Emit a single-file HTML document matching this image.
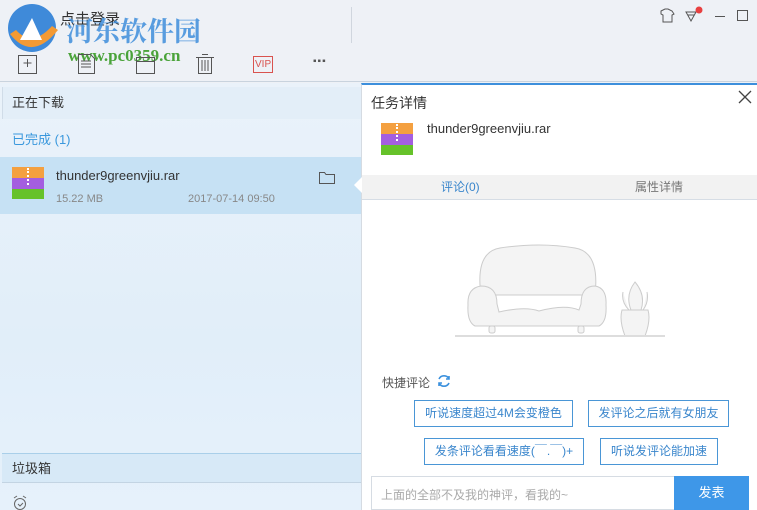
<!DOCTYPE html>
<html><head><meta charset="utf-8"><style>
*{margin:0;padding:0;box-sizing:border-box}
body{width:757px;height:510px;overflow:hidden;position:relative;font-family:"Liberation Sans","Noto Sans CJK SC",sans-serif;background:#eef1f6;font-size:13px;color:#333}
.a{position:absolute}
.left{left:0;top:83px;width:361px;height:427px;background:linear-gradient(180deg,#eaf2fa,#e1eef9 60%,#e6f1fb)}
.btn{position:absolute;border:1px solid #4a96d6;color:#3a86cc;font-size:12px;text-align:center;line-height:25px;background:#fff}
</style></head><body>
<div class="a" style="left:0;top:0;width:757px;height:82px;background:#eef1f6;border-bottom:1px solid #c9d3de"></div>
<svg class="a" style="left:2px;top:0" width="62" height="60"><circle cx="30" cy="28" r="24" fill="#3f8ad9"/><path d="M8 34 Q30 62 56 30 L50 26 Q30 48 14 30Z" fill="#f39a34"/><path d="M18 40 L30 18 L40 40Z" fill="#fff"/></svg>
<div class="a" style="left:60px;top:8px;font-size:15px;color:#333">点击登录</div>
<div class="a" style="left:66px;top:10px;font-size:27px;font-weight:bold;color:#3e8edb;opacity:.85;font-family:'Noto Serif CJK SC',serif">河东软件园</div>
<div class="a" style="left:68px;top:46px;font-size:17px;font-weight:bold;color:#4aa33a;font-family:'Liberation Serif',serif">www.pc0359.cn</div>
<div class="a" style="left:351px;top:7px;width:1px;height:36px;background:#d0d6de"></div>
<svg class="a" style="left:0;top:48px" width="340" height="30" fill="none" stroke="#555" stroke-width="1">
<rect x="18.5" y="7.5" width="18" height="18"/><path d="M27.5 11v8M23.5 15h8"/>
<path d="M78.5 6.5h12l4 4v15h-16z M81 13h10M81 16h10M81 19h10"/>
<rect x="136.5" y="9.5" width="18" height="16"/><path d="M136.5 13.5h18"/>
<path d="M196 9.5h18M202 6.5h6M198.5 9.5v16h13v-16M202 12v11M205 12v11M208 12v11"/>
<rect x="253.5" y="8.5" width="19" height="16" stroke="#d9534f"/>
</svg>
<div class="a" style="left:255px;top:59px;font-size:10px;color:#d9534f">VIP</div>
<div class="a" style="left:313px;top:56px;font-size:10px;color:#555;letter-spacing:1px">▪▪▪</div>
<svg class="a" style="left:655px;top:6px" width="100" height="20" fill="none" stroke="#555">
<path d="M6 5l4-2h3l4 2 2 3-2 1v7H8V9L6 8z"/>
<path d="M31 6h10l-5 9z M33 9h6"/><circle cx="44" cy="4" r="3.5" fill="#e84040" stroke="none"/>
<path d="M60 10.5h10"/><rect x="82.5" y="4.5" width="10" height="10"/>
</svg>
<div class="a left"></div>
<div class="a" style="left:2px;top:87px;width:359px;height:32px;background:#e3eef8;border-left:1px solid #d0dce8"></div>
<div class="a" style="left:12px;top:92px;font-size:13px">正在下载</div>
<div class="a" style="left:12px;top:129px;font-size:13px;color:#3a98dd">已完成 (1)</div>
<div class="a" style="left:0;top:157px;width:361px;height:57px;background:#c6e1f4"></div>
<div class="a" style="left:12px;top:167px;width:32px;height:11px;background:#f4a040"></div>
<div class="a" style="left:12px;top:178px;width:32px;height:11px;background:#a45ee0"></div>
<div class="a" style="left:12px;top:189px;width:32px;height:10px;background:#66c22a"></div>
<div class="a" style="left:27px;top:168px;width:2px;height:17px;border-left:2px dotted #fff"></div>
<div class="a" style="left:56px;top:168px;font-size:13px;color:#333">thunder9greenvjiu.rar</div>
<div class="a" style="left:56px;top:193px;font-size:11px;color:#888">15.22 MB</div>
<div class="a" style="left:188px;top:193px;font-size:11px;color:#888">2017-07-14 09:50</div>
<svg class="a" style="left:318px;top:170px" width="18" height="15" fill="none" stroke="#555"><path d="M1.5 2.5h5l1.5 2h8.5v9h-15z"/></svg>
<div class="a" style="left:2px;top:453px;width:359px;height:30px;background:#d7e9f7;border-top:1px solid #a9cfe9;border-bottom:1px solid #c3d4e3"></div>
<div class="a" style="left:12px;top:458px;font-size:13px">垃圾箱</div>
<svg class="a" style="left:12px;top:494px" width="16" height="16" fill="none" stroke="#666"><circle cx="8" cy="10" r="5.5"/><path d="M6 10l2 2 3-3M2 4l3-2M14 4l-3-2"/></svg>
<div class="a" style="left:361px;top:83px;width:396px;height:427px;background:#fff;border-top:2px solid #3d8fdc;border-left:1px solid #d5dbe2"></div>
<div class="a" style="left:354px;top:177px;width:0;height:0;border-top:8px solid transparent;border-bottom:8px solid transparent;border-right:8px solid #fff"></div>
<div class="a" style="left:371px;top:93px;font-size:14px">任务详情</div>
<svg class="a" style="left:738px;top:90px" width="14" height="14" stroke="#444" stroke-width="1.3"><path d="M1 1l12 12M13 1L1 13"/></svg>
<div class="a" style="left:381px;top:123px;width:32px;height:11px;background:#f4a040"></div>
<div class="a" style="left:381px;top:134px;width:32px;height:11px;background:#a45ee0"></div>
<div class="a" style="left:381px;top:145px;width:32px;height:10px;background:#66c22a"></div>
<div class="a" style="left:396px;top:124px;width:2px;height:17px;border-left:2px dotted #fff"></div>
<div class="a" style="left:427px;top:121px;font-size:13px">thunder9greenvjiu.rar</div>
<div class="a" style="left:362px;top:175px;width:395px;height:25px;background:#f2f2f2;border-bottom:1px solid #d6dde5"></div>
<div class="a" style="left:441px;top:178px;font-size:12px;color:#3a86cc">评论(0)</div>
<div class="a" style="left:635px;top:178px;font-size:12px;color:#777">属性详情</div>
<svg class="a" style="left:455px;top:240px" width="210" height="100" fill="#f4f4f4" stroke="#ccc">
<path d="M26 55 Q20 12 45 8 Q85 2 120 8 Q145 12 140 55Z"/>
<path d="M20 86 Q12 82 13 65 Q12 48 26 46 Q42 46 42 64 L44 72 Q70 66 84 71 Q110 64 124 70 L126 64 Q126 46 140 46 Q152 48 151 65 Q152 82 144 86Z"/>
<rect x="34" y="86" width="6" height="7" rx="2"/><rect x="123" y="86" width="6" height="7" rx="2"/>
<path d="M180 42 Q170 55 176 70 L186 70 Q191 55 180 42Z M168 52 Q166 62 174 70 M192 52 Q194 62 188 70"/>
<path d="M167 70 h26 q3 10 -3 26 h-20 q-6 -16 -3 -26z"/>
<path d="M0 96h210" stroke="#ddd" stroke-width="2"/>
</svg>
<div class="a" style="left:382px;top:374px;font-size:12px;color:#555">快捷评论</div>
<svg class="a" style="left:436px;top:373px" width="16" height="16" fill="none" stroke="#3a90dd" stroke-width="1.6"><path d="M13 6A5.5 5.5 0 0 0 3 6M3 10a5.5 5.5 0 0 0 10 0M13 3v3h-3M3 13v-3h3"/></svg>
<div class="btn" style="left:414px;top:400px;width:159px;height:27px">听说速度超过4M会变橙色</div>
<div class="btn" style="left:588px;top:400px;width:141px;height:27px">发评论之后就有女朋友</div>
<div class="btn" style="left:424px;top:438px;width:160px;height:27px">发条评论看看速度(￣.￣)+</div>
<div class="btn" style="left:600px;top:438px;width:118px;height:27px">听说发评论能加速</div>
<div class="a" style="left:371px;top:476px;width:304px;height:34px;border:1px solid #d6dce3;border-right:none;background:#fff"></div>
<div class="a" style="left:381px;top:486px;font-size:12px;color:#aaa">上面的全部不及我的神评，看我的~</div>
<div class="a" style="left:674px;top:476px;width:75px;height:34px;background:#3e97e8;color:#fff;font-size:13px;text-align:center;line-height:34px">发表</div>
</body></html>
